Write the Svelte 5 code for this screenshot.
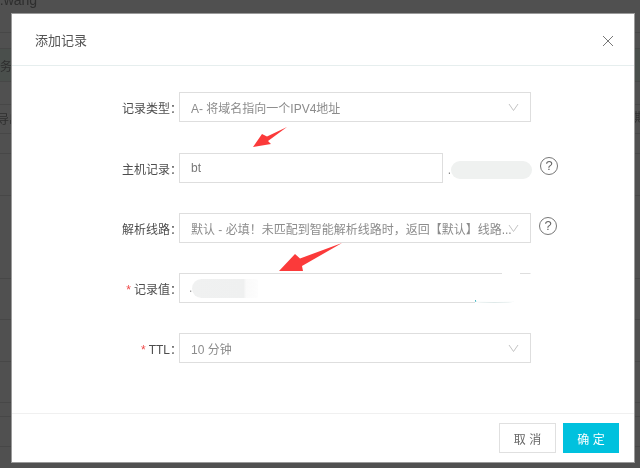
<script>
  const rows = [
    { label: '记录类型', kind: 'select', value: 'A- 将域名指向一个IPV4地址' },
    { label: '主机记录', kind: 'host', value: 'bt', help: true },
    { label: '解析线路', kind: 'select', value: '默认 - 必填！未匹配到智能解析线路时，返回【默认】线路...', help: true },
    { label: '记录值', kind: 'record', required: true },
    { label: 'TTL', kind: 'select', value: '10 分钟', required: true }
  ];
  const bgLines = [32, 48, 81, 104, 133, 153, 195, 278, 319, 361, 402, 416, 446];
</script>

<div class="page">
  <div class="backdrop" aria-hidden="true">
    <span class="bg-domain">u.wang</span>
    <span class="bg-band"></span>
    {#each bgLines as y}
      <span class="bg-line" style="top:{y}px"></span>
    {/each}
    <span class="bg-t1">务</span>
    <span class="bg-t2">导出</span>
    <span class="bg-t3">期</span>
  </div>

  <section class="modal">
    <header class="head">
      <h2>添加记录</h2>
      <svg class="close" width="12" height="12" viewBox="0 0 12 12"><path d="M1 1l10 10M11 1L1 11" /></svg>
    </header>

    <div class="body">
      {#each rows as row}
        <div class="row">
          <div class="label">
            {#if row.required}<span class="star">*</span>{/if}
            <span class="label-text">{row.label}：</span>
          </div>
          {#if row.kind === 'select'}
            <div class="field select">
              <span class="value">{row.value}</span>
              <svg class="chev" width="12" height="9" viewBox="0 0 12 9"><path d="M2 1l4.500 6.500L11 1" /></svg>
            </div>
          {:else if row.kind === 'host'}
            <div class="field host"><span class="value">{row.value}</span></div>
            <span class="suffix"><i>.</i><b class="smear"></b></span>
          {:else}
            <div class="field record">
              <span class="value-dot">.</span>
              <b class="smear smear-value"></b>
              <span class="erase erase-top"></span>
              <span class="erase erase-bottom"></span>
              <span class="erase-line"></span>
            </div>
          {/if}
          {#if row.help}
            <span class="help">?</span>
          {/if}
        </div>
      {/each}
    </div>

    <footer class="foot">
      <button class="btn">取 消</button>
      <button class="btn primary">确 定</button>
    </footer>

    <svg class="arrows" width="622" height="448" viewBox="12 14 622 448" aria-hidden="true">
      <path d="M287 127L267 136.500L262 134L253 147L271 144L268 141Z" class="red" />
      <path d="M342 243L300 258.500L295 254L279 271L303 271L302 266Z" class="red" />
    </svg>
  </section>
</div>

<style>
  :global(body) {
    margin: 0;
    background: #505050;
  }
  .page {
    position: relative;
    width: 640px;
    height: 468px;
    box-sizing: border-box;
    padding: 14px 6px 6px 12px;
    overflow: hidden;
    font-family: "Liberation Sans", "Noto Sans CJK SC", sans-serif;
    filter: blur(0.35px);
  }
  .backdrop {
    position: absolute;
    inset: 0;
    color: #2e2e2e;
    font-size: 12px;
  }
  .bg-domain {
    position: absolute;
    left: -8px;
    top: -8px;
    font-size: 14px;
  }
  .bg-band {
    position: absolute;
    left: 0;
    right: 0;
    top: 48px;
    height: 33px;
    background: #4a4f4c;
  }
  .bg-line {
    position: absolute;
    left: 0;
    right: 0;
    height: 1px;
    background: #474747;
  }
  .bg-t1 { position: absolute; left: 0; top: 57px; }
  .bg-t2 { position: absolute; left: -3px; top: 110px; }
  .bg-t3 { position: absolute; left: 634px; top: 108px; }

  .modal {
    position: relative;
    width: 622px;
    height: 448px;
    box-sizing: border-box;
    background: #fff;
    box-shadow: 0 0 0 1px #9a9a9a;
    display: flex;
    flex-direction: column;
  }
  .head {
    height: 52px;
    box-sizing: border-box;
    border-bottom: 1px solid #e6eeee;
    padding: 0 20px 0 23px;
    display: flex;
    align-items: center;
    justify-content: space-between;
  }
  h2 {
    margin: 0;
    font-size: 13px;
    font-weight: 400;
    color: #555;
  }
  .close {
    margin-top: 3px;
  }
  .close path {
    fill: none;
    stroke: #777;
    stroke-width: 1;
  }
  .body {
    flex: 1;
    padding-top: 26px;
    display: flex;
    flex-direction: column;
    gap: 30px;
  }
  .row {
    height: 30px;
    display: flex;
    align-items: center;
    position: relative;
  }
  .row:first-child {
    margin-bottom: 1px;
  }
  .label {
    width: 167px;
    box-sizing: border-box;
    display: flex;
    justify-content: flex-end;
    align-items: center;
    gap: 3px;
    font-size: 12px;
    color: #4d4d4d;
    flex: none;
  }
  .star {
    color: #f04a4a;
    font-size: 12px;
    line-height: 12px;
    transform: translateY(2px);
  }
  .label-text {
    margin-right: -3px;
  }
  .field {
    box-sizing: border-box;
    height: 30px;
    width: 352px;
    border: 1px solid #dedede;
    display: flex;
    align-items: center;
    padding-left: 11px;
    font-size: 12px;
    color: #8c8c8c;
    position: relative;
    flex: none;
  }
  .host {
    width: 264px;
    color: #777;
  }
  .value {
    white-space: nowrap;
  }
  .chev {
    position: absolute;
    right: 11px;
    top: 10px;
  }
  .chev path {
    fill: none;
    stroke: #c4c4c4;
    stroke-width: 1;
  }
  .suffix {
    width: 97px;
    height: 18px;
    margin-top: 4px;
    display: flex;
    align-items: center;
    flex: none;
    color: #888;
    font-size: 12px;
  }
  .suffix i {
    width: 8px;
    text-align: right;
    font-style: normal;
  }
  .smear {
    display: block;
    width: 81px;
    height: 18px;
    border-radius: 9px;
    background: #eff1f0;
  }
  .help {
    width: 16px;
    height: 16px;
    border: 1px solid #777;
    border-radius: 50%;
    font-size: 13px;
    line-height: 16px;
    text-align: center;
    color: #666;
    flex: none;
    margin-left: 8px;
    margin-top: -4px;
  }
  .suffix + .help {
    margin-left: 0;
  }
  .record {
    padding-left: 9px;
    border-right-color: transparent;
  }
  .value-dot {
    color: #999;
    line-height: 12px;
  }
  .smear-value {
    width: 66px;
    height: 19px;
    border-radius: 10px 2px 2px 10px;
    background: linear-gradient(90deg, #f0f1f1 0%, #eff0f0 78%, #fafafa 82%, #fdfdfd 100%);
  }
  .erase {
    position: absolute;
    background: #fff;
  }
  .erase-top {
    top: -2px;
    left: 322px;
    width: 18px;
    height: 3px;
  }
  .erase-bottom {
    top: 26px;
    left: 295px;
    width: 60px;
    height: 4px;
  }
  .erase-line {
    position: absolute;
    top: 26px;
    left: 295px;
    width: 38px;
    height: 2px;
    border-bottom: 1px solid #dfe9e9;
    border-left: 1px solid #4ab8c4;
    border-radius: 0 0 50% 50%;
  }
  .foot {
    height: 49px;
    box-sizing: border-box;
    border-top: 1px solid #f0f0f0;
    padding: 9px 15px 0 0;
    display: flex;
    justify-content: flex-end;
    align-items: flex-start;
    gap: 7px;
  }
  .btn {
    width: 57px;
    height: 30px;
    box-sizing: border-box;
    padding: 0;
    background: #fff;
    border: 1px solid #e0e0e0;
    color: #666;
    font: 12px "Liberation Sans", "Noto Sans CJK SC", sans-serif;
  }
  .primary {
    width: 56px;
    background: #00c1de;
    border-color: #00c1de;
    color: #fff;
  }
  .arrows {
    position: absolute;
    left: 0;
    top: 0;
    pointer-events: none;
  }
  .red {
    fill: #fb3a3a;
  }
</style>
